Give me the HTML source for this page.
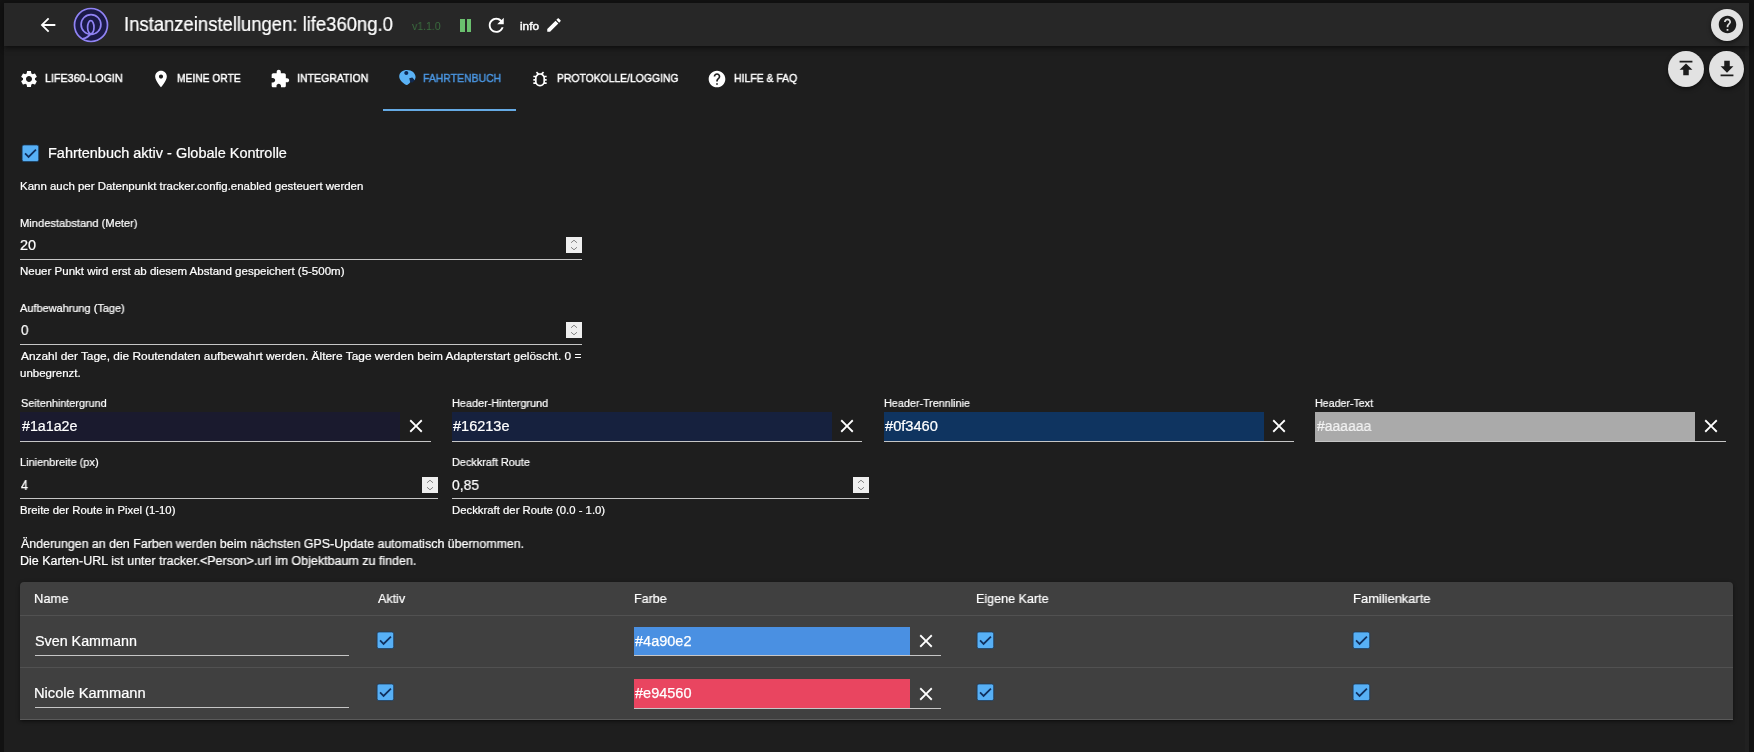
<!DOCTYPE html>
<html><head><meta charset="utf-8"><title>Instanzeinstellungen</title>
<style>
*{box-sizing:border-box;margin:0;padding:0}
html,body{width:1754px;height:752px;overflow:hidden;background:#121212;font-family:"Liberation Sans",sans-serif;color:#fff}
.abs{position:absolute}
svg{position:absolute;display:block;overflow:visible}
.t{position:absolute;white-space:nowrap;line-height:1;transform-origin:0 0;will-change:transform}
</style></head><body>
<div class="abs" style="left:4px;top:3px;width:1744.5px;height:749px;background:#1e1e1e;"></div>
<div class="abs" style="left:1745.3px;top:46px;width:3.7px;height:706px;background:#212121;"></div>
<div class="abs" style="left:4px;top:3px;width:1744.5px;height:43px;background:#272727;box-shadow:0 2px 4px -1px rgba(0,0,0,.45),0 3px 6px rgba(0,0,0,.25)"></div>
<svg style="left:36.75px;top:14.00px" width="22" height="22" viewBox="0 0 24 24" fill="#fff" ><path d="M20 11H7.83l5.590-5.590L12 4l-8 8 8 8 1.410-1.410L7.830 13H20v-2z"/></svg>
<svg style="left:73px;top:7px" width="36" height="36" viewBox="0 0 36 36" fill="none" stroke="#9083f4" stroke-width="1.700"><circle cx="18" cy="18" r="16.500" fill="#1b1a48"/><circle cx="18" cy="17.500" r="9.900"/><ellipse cx="17.800" cy="20.300" rx="3.200" ry="6.600"/><path d="M17.800 26.900 C15.500 29.500 12.500 31.500 9.200 31.900"/></svg>
<div class="t" style="left:124.29px;top:15px;font-size:19.5px;color:#fff;transform:scaleX(0.9466);-webkit-text-stroke:0.22px #fff;">Instanzeinstellungen: life360ng.0</div>
<div class="t" style="left:412.20px;top:21px;font-size:11.25px;color:#3b6d3f;transform:scaleX(0.9322);">v1.1.0</div>
<div class="abs" style="left:460px;top:18.8px;width:4.7px;height:13px;background:#6abf6e;"></div>
<div class="abs" style="left:466.7px;top:18.8px;width:4.7px;height:13px;background:#6abf6e;"></div>
<svg style="left:484.65px;top:14.35px" width="22.5" height="22.5" viewBox="0 0 24 24" fill="#fff" ><path d="M17.650 6.350C16.200 4.900 14.210 4 12 4c-4.420 0-7.990 3.580-7.990 8s3.570 8 7.990 8c3.730 0 6.840-2.550 7.730-6h-2.080c-.820 2.330-3.040 4-5.650 4-3.310 0-6-2.690-6-6s2.690-6 6-6c1.660 0 3.140.690 4.220 1.780L13 11h7V4l-2.350 2.350z"/></svg>
<div class="t" style="left:519.79px;top:21px;font-size:10.5px;color:#fff;transform:scaleX(1.1200);-webkit-text-stroke:0.4px #fff;">info</div>
<svg style="left:544.70px;top:15.90px" width="18" height="18" viewBox="0 0 24 24" fill="#fff" ><path d="M3 17.250V21h3.750L17.810 9.940l-3.750-3.750L3 17.250zM20.710 7.040c.390-.390.390-1.020 0-1.410l-2.340-2.340c-.390-.390-1.020-.390-1.410 0l-1.830 1.830 3.750 3.750 1.830-1.830z"/></svg>
<div class="abs" style="left:1711px;top:8.8px;width:32px;height:32px;background:#e2e2e2;border-radius:50%;box-shadow:0 2px 4px rgba(0,0,0,.5)"></div>
<svg style="left:1717.15px;top:14.25px" width="21" height="21" viewBox="0 0 24 24" fill="#1c1c1c" ><path d="M12 2C6.480 2 2 6.480 2 12s4.480 10 10 10 10-4.480 10-10S17.520 2 12 2zm1 17h-2v-2h2v2zm2.070-7.750l-.9.920C13.450 12.900 13 13.500 13 15h-2v-.500c0-1.100.450-2.100 1.170-2.830l1.240-1.260c.370-.360.590-.860.590-1.410 0-1.100-.9-2-2-2s-2 .9-2 2H8c0-2.210 1.790-4 4-4s4 1.790 4 4c0 .880-.360 1.680-.930 2.250z"/></svg>
<svg style="left:18.75px;top:68.90px" width="20" height="20" viewBox="0 0 24 24" fill="#fff" ><path d="M19.140 12.940c.040-.300.060-.610.060-.940 0-.320-.020-.640-.070-.940l2.030-1.580c.180-.140.230-.410.120-.610l-1.920-3.320c-.120-.220-.370-.290-.590-.220l-2.390.960c-.500-.380-1.030-.700-1.620-.940l-.360-2.540c-.040-.240-.240-.410-.480-.410h-3.840c-.240 0-.430.170-.470.410l-.360 2.540c-.590.240-1.130.570-1.620.940l-2.390-.960c-.220-.080-.470 0-.590.220L2.740 8.870c-.120.210-.080.470.120.610l2.030 1.580c-.050.300-.090.630-.090.940s.020.640.070.940l-2.030 1.580c-.180.140-.230.410-.120.610l1.920 3.320c.120.220.370.290.590.220l2.390-.960c.500.380 1.030.700 1.620.940l.360 2.540c.050.240.240.410.480.410h3.840c.240 0 .440-.170.470-.410l.360-2.540c.590-.240 1.130-.560 1.620-.940l2.390.960c.220.080.470 0 .590-.220l1.920-3.320c.120-.220.070-.470-.120-.610l-2.010-1.580zM12 15.600c-1.980 0-3.600-1.620-3.600-3.600s1.620-3.600 3.600-3.600 3.600 1.620 3.600 3.600-1.620 3.600-3.600 3.600z"/></svg>
<div class="t" style="left:44.95px;top:73px;font-size:11.5px;color:#fff;transform:scaleX(0.9346);-webkit-text-stroke:0.45px #fff;">LIFE360-LOGIN</div>
<svg style="left:150.60px;top:68.90px" width="20" height="20" viewBox="0 0 24 24" fill="#fff" ><path d="M12 2C8.130 2 5 5.130 5 9c0 5.250 7 13 7 13s7-7.750 7-13c0-3.870-3.130-7-7-7zm0 9.500c-1.380 0-2.500-1.120-2.500-2.500s1.120-2.500 2.500-2.500 2.500 1.120 2.500 2.500-1.120 2.500-2.500 2.500z"/></svg>
<div class="t" style="left:177.48px;top:73px;font-size:11.5px;color:#fff;transform:scaleX(0.8922);-webkit-text-stroke:0.45px #fff;">MEINE ORTE</div>
<svg style="left:270.30px;top:68.90px" width="20" height="20" viewBox="0 0 24 24" fill="#fff" ><path d="M20.500 11H19V7c0-1.100-.9-2-2-2h-4V3.500C13 2.120 11.880 1 10.500 1S8 2.120 8 3.500V5H4c-1.100 0-1.990.9-1.990 2v3.800H3.500c1.490 0 2.700 1.210 2.700 2.700s-1.210 2.700-2.700 2.700H2V20c0 1.100.9 2 2 2h3.800v-1.500c0-1.490 1.210-2.700 2.700-2.700 1.490 0 2.700 1.210 2.700 2.700V22H17c1.100 0 2-.9 2-2v-4h1.500c1.380 0 2.500-1.120 2.500-2.500S21.880 11 20.500 11z"/></svg>
<div class="t" style="left:296.96px;top:73px;font-size:11.5px;color:#fff;transform:scaleX(0.9167);-webkit-text-stroke:0.45px #fff;">INTEGRATION</div>
<svg style="left:398.600px;top:70.300px" width="16.600" height="15.100" viewBox="0 0 16.600 15.100"><circle cx="7.300" cy="3.100" r="2.300" fill="#0d2a58"/><path d="M10.300 8.300L13.300 7.600L15.800 10.300L13.500 12.500L11.200 12.300Z" fill="#10294f"/><path fill="#5ab2f5" fill-rule="evenodd" d="M0.200 6.500C0.200 2.500 3.800 0 8 0C13 0 16.600 3.200 16.600 7.200L15.800 10.300L13.300 7.600L10.300 8.300L11.200 12.300C10.200 13.800 9 14.800 7.600 15.100C4 13.500 0.200 10 0.200 6.500ZM7.300 1.100a2 2 0 1 0 0.010 0Z"/></svg>
<div class="t" style="left:423.22px;top:73px;font-size:11.5px;color:#4a96e2;transform:scaleX(0.9074);-webkit-text-stroke:0.45px #4a96e2;">FAHRTENBUCH</div>
<div class="abs" style="left:383px;top:108.7px;width:133px;height:2.3px;background:#65aae4;"></div>
<svg style="left:529.75px;top:69.25px" width="20" height="20" viewBox="0 0 24 24" fill="#fff" ><path d="M20 8h-2.810c-.450-.780-1.070-1.450-1.820-1.960L17 4.410 15.590 3l-2.170 2.170C12.960 5.060 12.490 5 12 5s-.960.060-1.410.170L8.410 3 7 4.410l1.620 1.630C7.880 6.550 7.260 7.220 6.810 8H4v2h2.090c-.050.330-.090.660-.090 1v1H4v2h2v1c0 .340.040.670.090 1H4v2h2.810c1.040 1.790 2.970 3 5.190 3s4.150-1.210 5.190-3H20v-2h-2.090c.050-.330.090-.660.090-1v-1h2v-2h-2v-1c0-.340-.040-.670-.090-1H20V8zm-4 4v3c0 .220-.030.470-.070.700l-.100.650-.370.650c-.720 1.240-2.040 2-3.460 2s-2.740-.770-3.460-2l-.370-.640-.100-.650C8.030 15.480 8 15.230 8 15v-4c0-.230.030-.480.070-.700l.100-.650.370-.650c.300-.520.720-.970 1.210-1.310l.570-.390.740-.180c.310-.080.630-.120.940-.120.320 0 .630.040.950.120l.680.160.610.420c.500.340.910.780 1.210 1.310l.380.650.100.650c.040.220.070.470.070.690v1z"/></svg>
<div class="t" style="left:556.97px;top:73px;font-size:11.5px;color:#fff;transform:scaleX(0.9017);-webkit-text-stroke:0.45px #fff;">PROTOKOLLE/LOGGING</div>
<svg style="left:706.90px;top:68.90px" width="20" height="20" viewBox="0 0 24 24" fill="#fff" ><path d="M12 2C6.480 2 2 6.480 2 12s4.480 10 10 10 10-4.480 10-10S17.520 2 12 2zm1 17h-2v-2h2v2zm2.070-7.750l-.9.920C13.450 12.900 13 13.500 13 15h-2v-.500c0-1.100.450-2.100 1.170-2.830l1.240-1.260c.370-.360.590-.860.590-1.410 0-1.100-.9-2-2-2s-2 .9-2 2H8c0-2.210 1.790-4 4-4s4 1.790 4 4c0 .880-.360 1.680-.930 2.250z"/></svg>
<div class="t" style="left:733.72px;top:73px;font-size:11.5px;color:#fff;transform:scaleX(0.9073);-webkit-text-stroke:0.45px #fff;">HILFE &amp; FAQ</div>
<div class="abs" style="left:1668px;top:50.6px;width:36.4px;height:36.4px;background:#e2e2e2;border-radius:50%;box-shadow:0 2px 4px rgba(0,0,0,.5)"></div>
<svg style="left:1674.70px;top:57.00px" width="22" height="22" viewBox="0 0 24 24" fill="#1c1c1c" ><path d="M5 4v2h14V4H5zm0 10h4v6h6v-6h4l-7-7-7 7z"/></svg>
<div class="abs" style="left:1708.8px;top:50.6px;width:35.6px;height:36.4px;background:#e2e2e2;border-radius:50%;box-shadow:0 2px 4px rgba(0,0,0,.5)"></div>
<svg style="left:1715.80px;top:58.20px" width="22" height="22" viewBox="0 0 24 24" fill="#1c1c1c" ><path d="M19 9h-4V3H9v6H5l7 7 7-7zM5 18v2h14v-2H5z"/></svg>
<svg style="left:21.6px;top:144.6px" width="16.800" height="16.600" viewBox="0 0 18 18"><rect width="18" height="18" rx="2" fill="#57b0f6" stroke="#173658" stroke-width="0.800"/><path d="M3.200 9.200 L7 13 L15 5" fill="none" stroke="#10305f" stroke-width="1.900"/></svg>
<div class="t" style="left:48.17px;top:146px;font-size:14px;color:#fff;transform:scaleX(1.0336);-webkit-text-stroke:0.22px #fff;">Fahrtenbuch aktiv - Globale Kontrolle</div>
<div class="t" style="left:20.19px;top:181px;font-size:11.25px;color:#fff;transform:scaleX(1.0185);-webkit-text-stroke:0.22px #fff;">Kann auch per Datenpunkt tracker.config.enabled gesteuert werden</div>
<div class="t" style="left:20.21px;top:218px;font-size:11.25px;color:#fff;transform:scaleX(0.9889);-webkit-text-stroke:0.22px #fff;">Mindestabstand (Meter)</div>
<div class="t" style="left:20.43px;top:238px;font-size:14px;color:#fff;transform:scaleX(1.0305);-webkit-text-stroke:0.22px #fff;">20</div>
<svg style="left:566px;top:237px" width="16" height="16" viewBox="0 0 16 16"><rect width="16" height="16" fill="#efefef"/><path d="M5 5.800 L8 3.200 L11 5.800 M5 10.200 L8 12.800 L11 10.200" fill="none" stroke="#858585" stroke-width="1"/></svg>
<div class="abs" style="left:20px;top:259px;width:562px;height:1px;background:#c6c6c6;"></div>
<div class="t" style="left:20.18px;top:266px;font-size:11.25px;color:#fff;transform:scaleX(1.0236);-webkit-text-stroke:0.22px #fff;">Neuer Punkt wird erst ab diesem Abstand gespeichert (5-500m)</div>
<div class="t" style="left:20.45px;top:303px;font-size:11.25px;color:#fff;transform:scaleX(0.9738);-webkit-text-stroke:0.22px #fff;">Aufbewahrung (Tage)</div>
<div class="t" style="left:20.72px;top:323px;font-size:14px;color:#fff;transform:scaleX(0.9571);-webkit-text-stroke:0.22px #fff;">0</div>
<svg style="left:566px;top:322px" width="16" height="16" viewBox="0 0 16 16"><rect width="16" height="16" fill="#efefef"/><path d="M5 5.800 L8 3.200 L11 5.800 M5 10.200 L8 12.800 L11 10.200" fill="none" stroke="#858585" stroke-width="1"/></svg>
<div class="abs" style="left:20px;top:344px;width:562px;height:1px;background:#c6c6c6;"></div>
<div class="t" style="left:20.55px;top:351px;font-size:11.25px;color:#fff;transform:scaleX(1.0568);-webkit-text-stroke:0.22px #fff;">Anzahl der Tage, die Routendaten aufbewahrt werden. Ältere Tage werden beim Adapterstart gelöscht. 0 =</div>
<div class="t" style="left:20.44px;top:368px;font-size:11.25px;color:#fff;transform:scaleX(1.0207);-webkit-text-stroke:0.22px #fff;">unbegrenzt.</div>
<div class="t" style="left:20.71px;top:398px;font-size:11.25px;color:#fff;transform:scaleX(0.9653);-webkit-text-stroke:0.22px #fff;">Seitenhintergrund</div>
<div class="abs" style="left:20px;top:411.75px;width:380px;height:29.5px;background:#1a1a2e;"></div>
<div class="t" style="left:21.70px;top:419px;font-size:14px;color:#fff;transform:scaleX(1.0176);-webkit-text-stroke:0.22px #fff;">#1a1a2e</div>
<svg style="left:404.60px;top:415.35px" width="22" height="22" viewBox="0 0 24 24" fill="#fff" ><path d="M19 6.410L17.590 5 12 10.590 6.410 5 5 6.410 10.590 12 5 17.590 6.410 19 12 13.410 17.590 19 19 17.590 13.410 12z"/></svg>
<div class="abs" style="left:20px;top:441px;width:410.6px;height:1px;background:#c6c6c6;"></div>
<div class="t" style="left:451.98px;top:398px;font-size:11.25px;color:#fff;transform:scaleX(0.9664);-webkit-text-stroke:0.22px #fff;">Header-Hintergrund</div>
<div class="abs" style="left:451.75px;top:411.75px;width:380px;height:29.5px;background:#16213e;"></div>
<div class="t" style="left:453.45px;top:419px;font-size:14px;color:#fff;transform:scaleX(1.0361);-webkit-text-stroke:0.22px #fff;">#16213e</div>
<svg style="left:836.35px;top:415.35px" width="22" height="22" viewBox="0 0 24 24" fill="#fff" ><path d="M19 6.410L17.590 5 12 10.590 6.410 5 5 6.410 10.590 12 5 17.590 6.410 19 12 13.410 17.590 19 19 17.590 13.410 12z"/></svg>
<div class="abs" style="left:451.75px;top:441px;width:410.6px;height:1px;background:#c6c6c6;"></div>
<div class="t" style="left:883.73px;top:398px;font-size:11.25px;color:#fff;transform:scaleX(0.9599);-webkit-text-stroke:0.22px #fff;">Header-Trennlinie</div>
<div class="abs" style="left:883.5px;top:411.75px;width:380px;height:29.5px;background:#0f3460;"></div>
<div class="t" style="left:885.20px;top:419px;font-size:14px;color:#fff;transform:scaleX(1.0438);-webkit-text-stroke:0.22px #fff;">#0f3460</div>
<svg style="left:1268.10px;top:415.35px" width="22" height="22" viewBox="0 0 24 24" fill="#fff" ><path d="M19 6.410L17.590 5 12 10.590 6.410 5 5 6.410 10.590 12 5 17.590 6.410 19 12 13.410 17.590 19 19 17.590 13.410 12z"/></svg>
<div class="abs" style="left:883.5px;top:441px;width:410.6px;height:1px;background:#c6c6c6;"></div>
<div class="t" style="left:1315.49px;top:398px;font-size:11.25px;color:#fff;transform:scaleX(0.9455);-webkit-text-stroke:0.22px #fff;">Header-Text</div>
<div class="abs" style="left:1315.25px;top:411.75px;width:380px;height:30px;background:#aaaaaa;"></div>
<div class="t" style="left:1316.70px;top:419px;font-size:14px;color:#f2f2f2;transform:scaleX(0.9945);-webkit-text-stroke:0.22px #f2f2f2;">#aaaaaa</div>
<svg style="left:1699.85px;top:415.35px" width="22" height="22" viewBox="0 0 24 24" fill="#fff" ><path d="M19 6.410L17.590 5 12 10.590 6.410 5 5 6.410 10.590 12 5 17.590 6.410 19 12 13.410 17.590 19 19 17.590 13.410 12z"/></svg>
<div class="abs" style="left:1315.25px;top:441px;width:410.6px;height:1px;background:#c6c6c6;"></div>
<div class="t" style="left:20.22px;top:457px;font-size:11.25px;color:#fff;transform:scaleX(0.9742);-webkit-text-stroke:0.22px #fff;">Linienbreite (px)</div>
<div class="t" style="left:20.98px;top:478px;font-size:14px;color:#fff;transform:scaleX(0.8897);-webkit-text-stroke:0.22px #fff;">4</div>
<svg style="left:422px;top:477px" width="16" height="16" viewBox="0 0 16 16"><rect width="16" height="16" fill="#efefef"/><path d="M5 5.800 L8 3.200 L11 5.800 M5 10.200 L8 12.800 L11 10.200" fill="none" stroke="#858585" stroke-width="1"/></svg>
<div class="abs" style="left:20px;top:498px;width:418px;height:1px;background:#c6c6c6;"></div>
<div class="t" style="left:20.20px;top:505px;font-size:11.25px;color:#fff;transform:scaleX(1.0062);-webkit-text-stroke:0.22px #fff;">Breite der Route in Pixel (1-10)</div>
<div class="t" style="left:451.98px;top:457px;font-size:11.25px;color:#fff;transform:scaleX(0.9648);-webkit-text-stroke:0.22px #fff;">Deckkraft Route</div>
<div class="t" style="left:452.46px;top:478px;font-size:14px;color:#fff;transform:scaleX(0.9886);-webkit-text-stroke:0.22px #fff;">0,85</div>
<svg style="left:853px;top:477px" width="16" height="16" viewBox="0 0 16 16"><rect width="16" height="16" fill="#efefef"/><path d="M5 5.800 L8 3.200 L11 5.800 M5 10.200 L8 12.800 L11 10.200" fill="none" stroke="#858585" stroke-width="1"/></svg>
<div class="abs" style="left:451.75px;top:498px;width:417.25px;height:1px;background:#c6c6c6;"></div>
<div class="t" style="left:451.94px;top:505px;font-size:11.25px;color:#fff;transform:scaleX(1.0080);-webkit-text-stroke:0.22px #fff;">Deckkraft der Route (0.0 - 1.0)</div>
<div class="t" style="left:21.20px;top:538px;font-size:12.5px;color:#fff;transform:scaleX(0.9905);-webkit-text-stroke:0.22px #fff;">Änderungen an den Farben werden beim nächsten GPS-Update automatisch übernommen.</div>
<div class="t" style="left:20.45px;top:555px;font-size:12.5px;color:#fff;transform:scaleX(0.9986);-webkit-text-stroke:0.22px #fff;">Die Karten-URL ist unter tracker.&lt;Person&gt;.url im Objektbaum zu finden.</div>
<div class="abs" style="left:20px;top:582px;width:1713px;height:137.5px;background:#404040;border-radius:4px 4px 0 0;box-shadow:0 2px 3px -1px rgba(0,0,0,.4),0 1px 4px rgba(0,0,0,.3)"></div>
<div class="abs" style="left:20px;top:615px;width:1713px;height:1px;background:#515151;"></div>
<div class="abs" style="left:20px;top:667px;width:1713px;height:1px;background:#515151;"></div>
<div class="abs" style="left:20px;top:719px;width:1713px;height:1px;background:#5a5a5a;"></div>
<div class="t" style="left:34.46px;top:592px;font-size:13px;color:#fff;transform:scaleX(0.9910);-webkit-text-stroke:0.22px #fff;">Name</div>
<div class="t" style="left:377.95px;top:592px;font-size:13px;color:#fff;transform:scaleX(0.9628);-webkit-text-stroke:0.22px #fff;">Aktiv</div>
<div class="t" style="left:633.74px;top:592px;font-size:13px;color:#fff;transform:scaleX(0.9600);-webkit-text-stroke:0.22px #fff;">Farbe</div>
<div class="t" style="left:976.23px;top:592px;font-size:13px;color:#fff;transform:scaleX(0.9654);-webkit-text-stroke:0.22px #fff;">Eigene Karte</div>
<div class="t" style="left:1353.21px;top:592px;font-size:13px;color:#fff;transform:scaleX(0.9928);-webkit-text-stroke:0.22px #fff;">Familienkarte</div>
<div class="t" style="left:34.94px;top:634px;font-size:14px;color:#fff;transform:scaleX(1.0224);-webkit-text-stroke:0.22px #fff;">Sven Kammann</div>
<div class="abs" style="left:35px;top:655px;width:313.75px;height:1px;background:#c6c6c6;"></div>
<svg style="left:377.3px;top:631.6px" width="16.800" height="16.600" viewBox="0 0 18 18"><rect width="18" height="18" rx="2" fill="#57b0f6" stroke="#173658" stroke-width="0.800"/><path d="M3.200 9.200 L7 13 L15 5" fill="none" stroke="#10305f" stroke-width="1.900"/></svg>
<svg style="left:977.3px;top:631.6px" width="16.800" height="16.600" viewBox="0 0 18 18"><rect width="18" height="18" rx="2" fill="#57b0f6" stroke="#173658" stroke-width="0.800"/><path d="M3.200 9.200 L7 13 L15 5" fill="none" stroke="#10305f" stroke-width="1.900"/></svg>
<svg style="left:1353.05px;top:631.6px" width="16.800" height="16.600" viewBox="0 0 18 18"><rect width="18" height="18" rx="2" fill="#57b0f6" stroke="#173658" stroke-width="0.800"/><path d="M3.200 9.200 L7 13 L15 5" fill="none" stroke="#10305f" stroke-width="1.900"/></svg>
<div class="abs" style="left:633.75px;top:627px;width:276.5px;height:28.5px;background:#4a90e2;"></div>
<div class="t" style="left:634.95px;top:634px;font-size:14px;color:#fff;transform:scaleX(1.0361);-webkit-text-stroke:0.25px #fff;">#4a90e2</div>
<svg style="left:914.60px;top:629.60px" width="22" height="22" viewBox="0 0 24 24" fill="#fff" ><path d="M19 6.410L17.590 5 12 10.590 6.410 5 5 6.410 10.590 12 5 17.590 6.410 19 12 13.410 17.590 19 19 17.590 13.410 12z"/></svg>
<div class="abs" style="left:633.75px;top:655px;width:307.0px;height:1px;background:#c6c6c6;"></div>
<div class="t" style="left:34.40px;top:686px;font-size:14px;color:#fff;transform:scaleX(1.0473);-webkit-text-stroke:0.22px #fff;">Nicole Kammann</div>
<div class="abs" style="left:35px;top:707px;width:313.75px;height:1px;background:#c6c6c6;"></div>
<svg style="left:377.3px;top:683.6px" width="16.800" height="16.600" viewBox="0 0 18 18"><rect width="18" height="18" rx="2" fill="#57b0f6" stroke="#173658" stroke-width="0.800"/><path d="M3.200 9.200 L7 13 L15 5" fill="none" stroke="#10305f" stroke-width="1.900"/></svg>
<svg style="left:977.3px;top:683.6px" width="16.800" height="16.600" viewBox="0 0 18 18"><rect width="18" height="18" rx="2" fill="#57b0f6" stroke="#173658" stroke-width="0.800"/><path d="M3.200 9.200 L7 13 L15 5" fill="none" stroke="#10305f" stroke-width="1.900"/></svg>
<svg style="left:1353.05px;top:683.6px" width="16.800" height="16.600" viewBox="0 0 18 18"><rect width="18" height="18" rx="2" fill="#57b0f6" stroke="#173658" stroke-width="0.800"/><path d="M3.200 9.200 L7 13 L15 5" fill="none" stroke="#10305f" stroke-width="1.900"/></svg>
<div class="abs" style="left:633.75px;top:678.8px;width:276.5px;height:29.5px;background:#e94560;"></div>
<div class="t" style="left:634.95px;top:686px;font-size:14px;color:#fff;transform:scaleX(1.0361);-webkit-text-stroke:0.25px #fff;">#e94560</div>
<svg style="left:914.60px;top:682.60px" width="22" height="22" viewBox="0 0 24 24" fill="#fff" ><path d="M19 6.410L17.590 5 12 10.590 6.410 5 5 6.410 10.590 12 5 17.590 6.410 19 12 13.410 17.590 19 19 17.590 13.410 12z"/></svg>
<div class="abs" style="left:633.75px;top:708px;width:307.0px;height:1px;background:#c6c6c6;"></div>
</body></html>
